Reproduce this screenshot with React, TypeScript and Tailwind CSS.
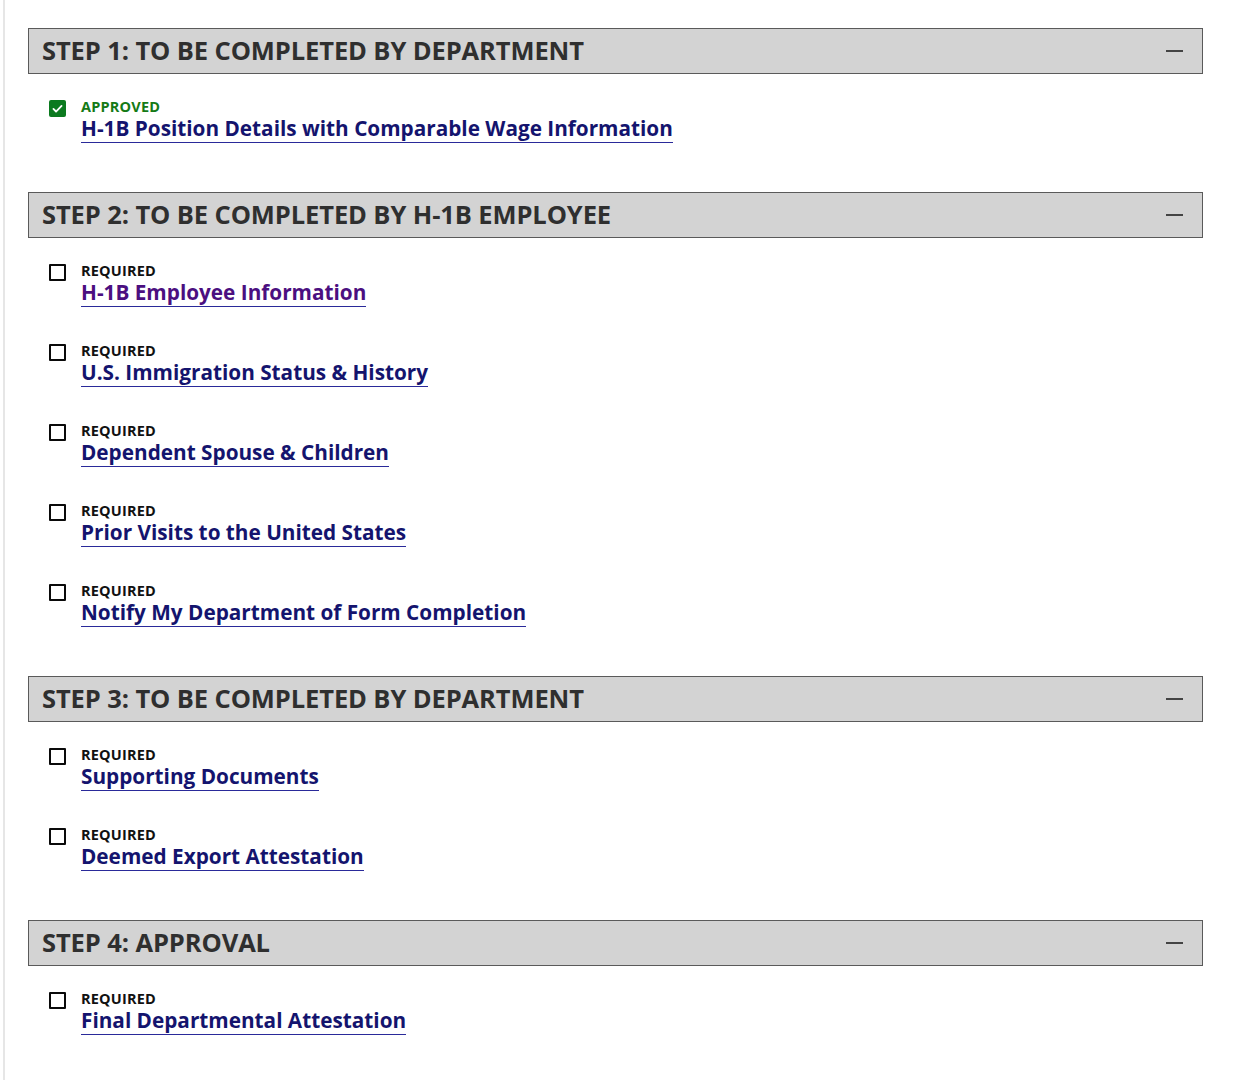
import React from "react";

type Item = { status: "approved" | "required"; title: string; visited?: boolean };
type Step = { title: string; items: Item[] };

const steps: Step[] = [
  {
    title: "STEP 1: TO BE COMPLETED BY DEPARTMENT",
    items: [{ status: "approved", title: "H-1B Position Details with Comparable Wage Information" }],
  },
  {
    title: "STEP 2: TO BE COMPLETED BY H-1B EMPLOYEE",
    items: [
      { status: "required", title: "H-1B Employee Information", visited: true },
      { status: "required", title: "U.S. Immigration Status & History" },
      { status: "required", title: "Dependent Spouse & Children" },
      { status: "required", title: "Prior Visits to the United States" },
      { status: "required", title: "Notify My Department of Form Completion" },
    ],
  },
  {
    title: "STEP 3: TO BE COMPLETED BY DEPARTMENT",
    items: [
      { status: "required", title: "Supporting Documents" },
      { status: "required", title: "Deemed Export Attestation" },
    ],
  },
  {
    title: "STEP 4: APPROVAL",
    items: [{ status: "required", title: "Final Departmental Attestation" }],
  },
];

function CheckBox({ checked }: { checked: boolean }) {
  if (checked) {
    return (
      <div className="w-[17px] h-[17px] rounded-[2px] bg-[#0b7a1f] flex items-center justify-center">
        <svg width="13" height="13" viewBox="0 0 16 16" fill="none">
          <path d="M3 8.5l3.2 3.2L13 4.8" stroke="white" strokeWidth="2.2" strokeLinecap="round" strokeLinejoin="round" />
        </svg>
      </div>
    );
  }
  return <div className="w-[17px] h-[17px] border-2 border-[#0a0a0a] bg-white rounded-[1px]" />;
}

export default function App() {
  return (
    <div className="min-h-[1080px] bg-white" style={{ fontFamily: '"Open Sans", "Noto Sans", sans-serif' }}>
      <div className="ml-[3px] border-l-2 border-[#e6e6e6] min-h-[1080px] pl-[23px] pr-[55px] pt-[28px]">
        {steps.map((step, si) => (
          <section key={si} className="mb-[49px]">
            <div className="h-[46px] bg-[#d3d3d3] border border-[#5a5a5a] flex items-center justify-between pl-[13px] pr-[19px]">
              <h2 className="text-[25.5px] font-bold text-[#2f2f2f] tracking-[-0.1px] leading-none">{step.title}</h2>
              <div className="w-[17px] h-[2px] bg-[#444]" />
            </div>
            <div className="pt-[24px] pl-[21px] flex flex-col gap-[35px]">
              {step.items.map((it, ii) => (
                <div key={ii} className="flex items-start gap-[15px]">
                  <div className="pt-[2px]">
                    <CheckBox checked={it.status === "approved"} />
                  </div>
                  <div className="flex flex-col">
                    <span
                      className={
                        "text-[14.5px] font-bold leading-[17px] tracking-[0.2px] " +
                        (it.status === "approved" ? "text-[#157a16]" : "text-[#111]")
                      }
                    >
                      {it.status === "approved" ? "APPROVED" : "REQUIRED"}
                    </span>
                    <a
                      href="#"
                      className={
                        "self-start text-[20.75px] font-bold leading-[26px] pb-[1px] border-b border-[#2a2a9a] " +
                        (it.visited ? "text-[#4b0f80]" : "text-[#14146e]")
                      }
                    >
                      {it.title}
                    </a>
                  </div>
                </div>
              ))}
            </div>
          </section>
        ))}
      </div>
    </div>
  );
}
